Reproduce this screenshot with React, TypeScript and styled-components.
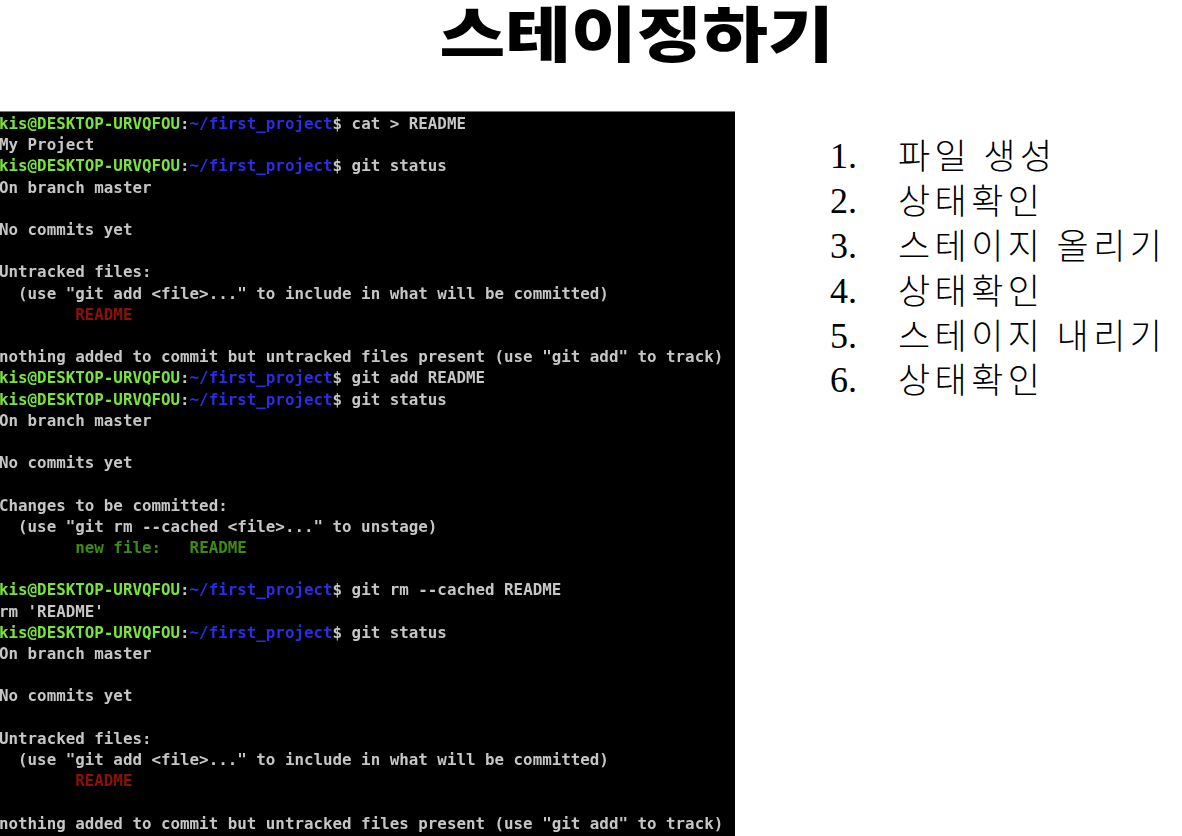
import React from 'react';
import styled, { createGlobalStyle } from 'styled-components';

const GlobalStyle = createGlobalStyle`
  html, body {
    margin: 0;
    padding: 0;
    background: #fff;
    overflow: hidden;
  }
`;

const S = {
  Slide: styled.div`
    width: 1182px;
    height: 836px;
    overflow: hidden;
    display: flex;
    flex-direction: column;
  `,
  TitleBar: styled.div`
    height: 111px;
    flex: none;
    display: flex;
    justify-content: center;
    align-items: flex-start;
    padding: 1px 0 0 92px;
    box-sizing: border-box;
  `,
  Title: styled.h1`
    margin: 0;
    font-family: 'Noto Sans CJK KR', sans-serif;
    font-size: 60px;
    font-weight: 900;
    line-height: 60px;
    color: #000;
    transform: scaleX(1.19);
  `,
  Body: styled.div`
    display: flex;
    flex: 1;
    min-height: 0;
  `,
  Terminal: styled.div`
    width: 735px;
    flex: none;
    box-sizing: border-box;
    padding-top: 1px;
    background: #000;
    border-top: 1px solid #777;
    overflow: hidden;
  `,
  Output: styled.pre`
    margin: 0 0 0 -1px;
    font-family: 'DejaVu Sans Mono', 'Liberation Mono', monospace;
    font-size: 15.84px;
    font-weight: 700;
    line-height: 21.21px;
    color: #c6c6c6;
    filter: blur(0.65px);
  `,
  Line: styled.div`
    height: 21.21px;
    white-space: pre;
  `,
  Host: styled.span`
    color: #7ae43a;
  `,
  Path: styled.span`
    color: #2c2ce6;
  `,
  Untracked: styled.span`
    color: #8c1208;
  `,
  Staged: styled.span`
    color: #3f8c12;
  `,
  StepList: styled.ol`
    margin: 22px 0 0 95px;
    padding: 0;
    list-style: none;
  `,
  Step: styled.li`
    display: flex;
    height: 44.8px;
    align-items: center;
    white-space: nowrap;
    color: #000;
  `,
  Num: styled.span`
    width: 68px;
    flex: none;
    font-family: 'Liberation Serif', serif;
    font-size: 36px;
    line-height: 40px;
    position: relative;
    top: 1px;
  `,
  Label: styled.span`
    font-family: 'Noto Sans CJK KR', sans-serif;
    font-size: 35px;
    font-weight: 300;
    line-height: 40px;
    letter-spacing: 4.4px;
    position: relative;
    top: -1px;
  `,
};

const Prompt = ({ cmd }: { cmd: string }) => (
  <S.Line>
    <S.Host>kis@DESKTOP-URVQFOU</S.Host>:<S.Path>~/first_project</S.Path>$ {cmd}
  </S.Line>
);

const Text = ({ children }: { children?: React.ReactNode }) => <S.Line>{children}</S.Line>;

const steps = ['파일 생성', '상태확인', '스테이지 올리기', '상태확인', '스테이지 내리기', '상태확인'];

export default function App() {
  return (
    <S.Slide>
      <GlobalStyle />
      <S.TitleBar>
        <S.Title>스테이징하기</S.Title>
      </S.TitleBar>
      <S.Body>
        <S.Terminal>
          <S.Output>
            <Prompt cmd="cat > README" />
            <Text>My Project</Text>
            <Prompt cmd="git status" />
            <Text>On branch master</Text>
            <Text />
            <Text>No commits yet</Text>
            <Text />
            <Text>Untracked files:</Text>
            <Text>{'  (use "git add <file>..." to include in what will be committed)'}</Text>
            <Text>{'        '}<S.Untracked>README</S.Untracked></Text>
            <Text />
            <Text>nothing added to commit but untracked files present (use "git add" to track)</Text>
            <Prompt cmd="git add README" />
            <Prompt cmd="git status" />
            <Text>On branch master</Text>
            <Text />
            <Text>No commits yet</Text>
            <Text />
            <Text>Changes to be committed:</Text>
            <Text>{'  (use "git rm --cached <file>..." to unstage)'}</Text>
            <Text>{'        '}<S.Staged>new file:   README</S.Staged></Text>
            <Text />
            <Prompt cmd="git rm --cached README" />
            <Text>rm 'README'</Text>
            <Prompt cmd="git status" />
            <Text>On branch master</Text>
            <Text />
            <Text>No commits yet</Text>
            <Text />
            <Text>Untracked files:</Text>
            <Text>{'  (use "git add <file>..." to include in what will be committed)'}</Text>
            <Text>{'        '}<S.Untracked>README</S.Untracked></Text>
            <Text />
            <Text>nothing added to commit but untracked files present (use "git add" to track)</Text>
          </S.Output>
        </S.Terminal>
        <S.StepList>
          {steps.map((step, i) => (
            <S.Step key={i}>
              <S.Num>{i + 1}.</S.Num>
              <S.Label>{step}</S.Label>
            </S.Step>
          ))}
        </S.StepList>
      </S.Body>
    </S.Slide>
  );
}
